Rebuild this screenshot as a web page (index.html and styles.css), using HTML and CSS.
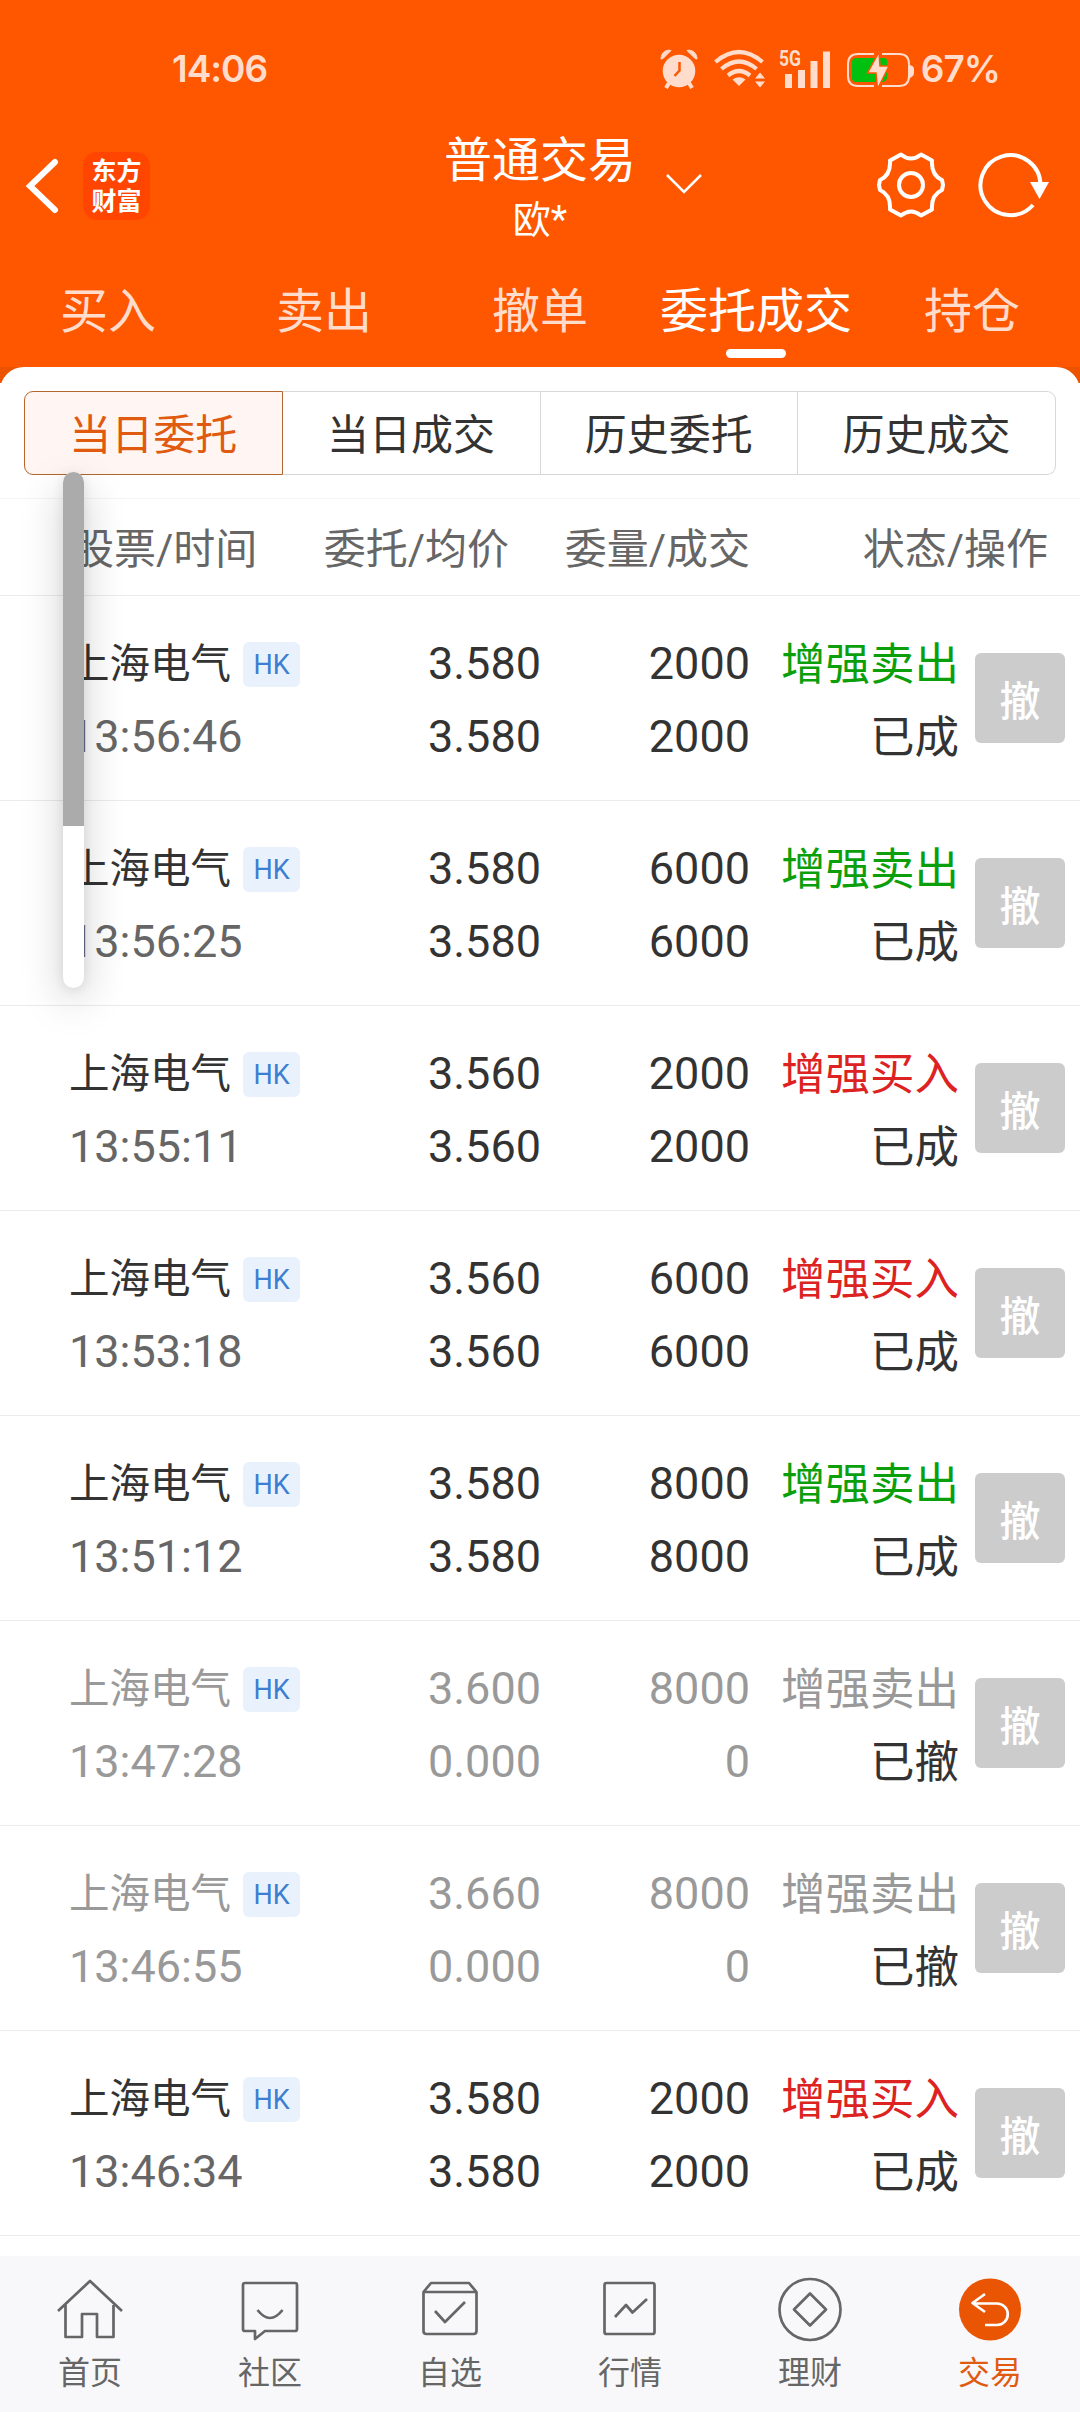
FILE: index.html
```html
<!DOCTYPE html>
<html lang="zh-CN">

<head>
	<title>委托成交</title>

	<meta charset="utf-8">

	<!-- Mobile Screen Resizing -->
	<meta name="viewport" content="width=device-width, initial-scale=1.0">

	<link rel="stylesheet" href="styles.css">
</head>

<body>

	<header class="header">
		<div class="status">
			<span class="status-time">14:06</span>
			<div class="status-icons">
				<svg class="icon-alarm" width="38" height="40" viewBox="0 0 38 40">
					<circle cx="19" cy="22" r="16.3" fill="currentColor" />
					<path d="M9 34l-3 5M29 34l3 5" stroke="currentColor" stroke-width="4" />
					<path d="M1 10C1 4 6 0 11 1.500L3 9.500zM37 10C37 4 32 0 27 1.500L35 9.500z" fill="currentColor" stroke="currentColor" stroke-width="1" />
					<path d="M19.500 13v8.500L14.500 27" fill="none" stroke="#ff5600" stroke-width="2.500" />
				</svg>
				<svg class="icon-wifi" width="52" height="40" viewBox="0 0 52 40">
					<path d="M1.500 13Q25 -7 48.500 13M7.500 20Q25 5 42.500 20M14 26.500Q25 17.500 36 26.500" fill="none" stroke="currentColor" stroke-width="4.200" />
					<path d="M25 37l-6.500-6.500Q25 26 31.500 30.500z" fill="currentColor" />
					<path d="M41 29.500l5-6 5 6zM41 32.500l5 6 5-6z" fill="currentColor" />
				</svg>
				<svg class="icon-signal" width="52" height="40" viewBox="0 0 52 40">
					<path d="M6 25h7v14H6zM19 21h7v18h-7zM31.500 12h7v27h-7zM44 2.500h7V39h-7z" fill="currentColor" />
					<text class="signal-label" x="0" y="17" textLength="22" lengthAdjust="spacingAndGlyphs">5G</text>
				</svg>
				<svg class="icon-battery" width="68" height="40" viewBox="0 0 68 40">
					<path d="M28 5H12Q2 5 2 15v12q0 10 10 10h16M36 37h17q10 0 10-10V15Q63 5 53 5H36" fill="none" stroke="currentColor" stroke-width="2" />
					<path d="M10 9h28q3 0 3 3v17q-1 4-5 4H10q-4 0-4-4V13q0-4 4-4z" fill="#00c010" />
					<path d="M63 16h1q4 1 4 4v4q0 3-4 5h-1z" fill="currentColor" />
					<path d="M33 3L21.500 24h8.500L31.500 40l11.500-23h-9z" fill="currentColor" stroke="#ff5600" stroke-width="1.500" />
				</svg>
			</div>
			<span class="status-battery">67%</span>
		</div>

		<div class="navbar">
			<div class="navbar-side">
				<svg width="34" height="56" viewBox="0 0 34 56">
					<path d="M30 4L5 28l25 24" fill="none" stroke="#fff" stroke-width="6" stroke-linecap="round" />
				</svg>
				<div class="logo">东方<br>财富</div>
			</div>
			<div class="navbar-title">
				<h1>普通交易</h1>
				<p>欧*</p>
				<svg class="chevron" width="38" height="22" viewBox="0 0 38 22">
					<path d="M2 2l17 17L36 2" fill="none" stroke="#fff" stroke-width="2.500" />
				</svg>
			</div>
			<div class="navbar-side navbar-right">
				<svg width="68" height="68" viewBox="0 0 68 68">
					<path d="M24 3.500Q34 11.500 44 3.500L55 9.500Q54 24 65 29L66 34 65 39Q54 44 55 58.500L44 64.500Q34 56.500 24 64.500L13 58.500Q14 44 3 39L2 34 3 29Q14 24 13 9.500Z" fill="none" stroke="#fff" stroke-width="4" stroke-linejoin="round" />
					<circle cx="34" cy="34" r="12" fill="none" stroke="#fff" stroke-width="4" />
				</svg>
				<svg width="72" height="68" viewBox="0 0 72 68">
					<path d="M62.500 34A30 30 0 1 0 55 54" fill="none" stroke="#fff" stroke-width="4" />
					<path d="M52 31h19l-9.500 17z" fill="#fff" />
				</svg>
			</div>
		</div>

		<nav class="tabs">
			<a class="tab">买入</a>
			<a class="tab">卖出</a>
			<a class="tab">撤单</a>
			<a class="tab active">委托成交</a>
			<a class="tab">持仓</a>
		</nav>
	</header>

	<main class="content">
		<div class="sheet">
			<div class="segments">
				<a class="segment active">当日委托</a>
				<a class="segment">当日成交</a>
				<a class="segment">历史委托</a>
				<a class="segment">历史成交</a>
			</div>

			<div class="row row-head">
				<div>股票/时间</div>
				<div>委托/均价</div>
				<div>委量/成交</div>
				<div>状态/操作</div>
			</div>

			<div id="orders"></div>
		</div>

		<div class="scrollbar">
			<div class="scrollbar-thumb"></div>
		</div>
	</main>

	<footer class="tabbar">
		<a class="tabbar-item">
			<svg width="72" height="72" viewBox="0 0 72 72">
				<path d="M4 38L36 8l32 30M11.500 32v32H28V41h15v23h16.500V32" />
			</svg>
			首页
		</a>
		<a class="tabbar-item">
			<svg width="72" height="72" viewBox="0 0 72 72">
				<path d="M11 10h50q2 0 2 2v44q0 2-2 2H31l-10 8v-8H11q-2 0-2-2V12q0-2 2-2zM23.500 37q12.500 16 25 0" />
			</svg>
			社区
		</a>
		<a class="tabbar-item">
			<svg width="72" height="72" viewBox="0 0 72 72">
				<path d="M9.500 19L17 10h38l7.500 9v39q0 3-3 3h-47q-3 0-3-3zM9.500 19h53M21 38l10 11 20-20" />
			</svg>
			自选
		</a>
		<a class="tabbar-item">
			<svg width="72" height="72" viewBox="0 0 72 72">
				<rect x="10.500" y="10" width="50" height="51" rx="2" />
				<path d="M21 44l11-12 6.500 7.500L53 26" />
			</svg>
			行情
		</a>
		<a class="tabbar-item">
			<svg width="72" height="72" viewBox="0 0 72 72">
				<circle cx="36" cy="36.500" r="30.500" />
				<path d="M36 20.500L52 36.500 36 52.500 20 36.500z" />
			</svg>
			理财
		</a>
		<a class="tabbar-item active">
			<svg width="72" height="72" viewBox="0 0 72 72">
				<circle class="disc" cx="36" cy="36.500" r="31" />
				<path class="arrow" d="M31 21L18.500 30 31 39M19 30.500h24a10.500 10.500 0 0 1 0 21.500H31" />
			</svg>
			交易
		</a>
	</footer>

	<script>
		// time, price, average price, amount, filled, side
		var orders = [
			['13:56:46', '3.580', '3.580', '2000', '2000', 'sell'],
			['13:56:25', '3.580', '3.580', '6000', '6000', 'sell'],
			['13:55:11', '3.560', '3.560', '2000', '2000', 'buy'],
			['13:53:18', '3.560', '3.560', '6000', '6000', 'buy'],
			['13:51:12', '3.580', '3.580', '8000', '8000', 'sell'],
			['13:47:28', '3.600', '0.000', '8000', '0', 'cancelled'],
			['13:46:55', '3.660', '0.000', '8000', '0', 'cancelled'],
			['13:46:34', '3.580', '3.580', '2000', '2000', 'buy']
		];

		var app = document.querySelector('#orders');

		// build a row for each order
		app.innerHTML = orders.map(function (order) {
			var side = order[5];
			return '<div class="row ' + side + '">' +
				'<div><div class="name">上海电气<span class="badge">HK</span></div><div class="time">' + order[0] + '</div></div>' +
				'<div><div>' + order[1] + '</div><div>' + order[2] + '</div></div>' +
				'<div><div>' + order[3] + '</div><div>' + order[4] + '</div></div>' +
				'<div class="result"><div class="side">' + (side === 'buy' ? '增强买入' : '增强卖出') + '</div>' +
				'<div class="state">' + (side === 'cancelled' ? '已撤' : '已成') + '</div></div>' +
				'<button class="btn">撤</button>' +
				'</div>';
		}).join('');
	</script>

</body>

</html>
```
FILE: styles.css
```css
*,
*:before,
*:after {
	box-sizing: border-box;
}

/**
 * Layout
 */
body {
	background-color: #ffffff;
	color: #333333;
	display: flex;
	flex-direction: column;
	font-family: Roboto, "Noto Sans CJK SC", sans-serif;
	height: 2412px;
	margin: 0;
	overflow: hidden;
	width: 1080px;
}

svg {
	display: block;
	flex: none;
}

.header {
	background-color: #ff5600;
	color: #ffffff;
	flex: none;
	height: 367px;
}

.content {
	background: linear-gradient(#ec5300 16px, #ffffff 16px);
	flex: 1;
	min-height: 0;
	position: relative;
}

.sheet {
	background-color: #ffffff;
	border-radius: 24px 24px 0 0;
	padding-top: 24px;
}

/**
 * Status bar
 */
.status {
	align-items: center;
	color: #ffdccb;
	display: flex;
	font-family: Inter, sans-serif;
	font-size: 37px;
	font-weight: 600;
	height: 137px;
	justify-content: space-between;
	letter-spacing: -1px;
	line-height: 1;
	padding: 0 80px 0 172px;
}

.status-icons {
	display: flex;
	margin-left: auto;
}

.icon-wifi {
	margin-left: 16px;
}

.icon-signal {
	margin-left: 13px;
	overflow: visible;
}

.icon-battery {
	margin-left: 15px;
}

.status-battery {
	margin-left: 7px;
}

.signal-label {
	fill: currentColor;
	font-family: Roboto, sans-serif;
	font-size: 22px;
	font-weight: 700;
	letter-spacing: 0;
}

/**
 * Navbar
 */
.navbar {
	display: flex;
	height: 116px;
	justify-content: space-between;
}

.navbar-side {
	align-items: center;
	display: flex;
	gap: 24px;
	height: 97px;
	padding-left: 25px;
	width: 280px;
}

.navbar-right {
	gap: 33px;
	height: 95px;
	justify-content: flex-end;
	padding: 0 30px 0 0;
}

.logo {
	background-color: #ff4500;
	border-radius: 14px;
	font-family: "Noto Sans CJK SC", sans-serif;
	font-size: 25px;
	font-weight: 700;
	height: 68px;
	line-height: 30px;
	padding-top: 2px;
	text-align: center;
	width: 67px;
}

.navbar-title {
	position: relative;
	text-align: center;
}

.navbar-title h1 {
	font-size: 48px;
	font-weight: 400;
	line-height: 48px;
	margin: 0;
}

.navbar-title p {
	font-size: 38px;
	line-height: 50px;
	margin: 10px 0 0;
}

.chevron {
	left: 100%;
	margin-left: 29px;
	position: absolute;
	top: 36px;
}

.tabs {
	display: flex;
	height: 114px;
}

.tab {
	color: #ffdccb;
	flex: 1;
	font-size: 48px;
	line-height: 118px;
	position: relative;
	text-align: center;
	white-space: nowrap;
}

.tab.active {
	color: #ffffff;
}

.tab.active:after {
	background-color: #ffffff;
	border-radius: 5px;
	bottom: 9px;
	content: "";
	height: 9px;
	left: 50%;
	margin-left: -30px;
	position: absolute;
	width: 60px;
}

/**
 * Segments
 */
.segments {
	display: flex;
	height: 84px;
	margin: 0 24px;
}

.segment {
	border: 1px solid #d5d7d8;
	border-left-width: 0;
	flex: 1;
	font-size: 42px;
	line-height: 87px;
	text-align: center;
}

.segment:last-child {
	border-radius: 0 9px 9px 0;
}

.segment.active {
	background-color: #fff6f3;
	border: 1px solid #b5662f;
	border-radius: 9px 0 0 9px;
	color: #e05a10;
}

/**
 * Orders
 */
.row {
	border-bottom: 1px solid #ebebeb;
	display: grid;
	font-size: 45px;
	grid-template-columns: 271px 201px 209px 209px 106px;
	height: 205px;
	line-height: 73px;
	padding: 31px 15px 0 69px;
	text-align: right;
	white-space: nowrap;
}

.row > div:first-child {
	text-align: left;
}

.row-head {
	border-top: 1px solid #f5f5f5;
	color: #666666;
	font-size: 42px;
	grid-template-columns: 271px 169px 241px 298px;
	height: 98px;
	line-height: 102px;
	margin-top: 23px;
	padding-left: 69px;
	padding-right: 0;
	padding-top: 0;
}

.row-head > div:first-child {
	padding-left: 3px;
}

.row-head > div:nth-child(2) {
	margin-left: -20px;
	margin-right: 0;
	text-align: right;
}

.name {
	align-items: center;
	display: flex;
	font-size: 40.5px;
	padding-top: 2px;
	height: 73px;
}

.badge {
	background-color: #e8f1fc;
	border-radius: 6px;
	color: #3b7ed2;
	font-size: 27px;
	height: 45px;
	line-height: 46px;
	margin-left: 12px;
	text-align: center;
	width: 57px;
}

.time {
	color: #666666;
}

.result {
	font-size: 44.5px;
	padding-top: 2px;
}

.sell .side {
	color: #0b9f0b;
}

.buy .side {
	color: #dd2222;
}

.cancelled {
	color: #999999;
}

.cancelled .time {
	color: #999999;
}

.cancelled .state {
	color: #333333;
}

.btn {
	background-color: #cccccc;
	border: 0;
	border-radius: 6px;
	color: #ffffff;
	font-family: inherit;
	font-size: 41px;
	font-weight: 500;
	height: 90px;
	margin-left: 16px;
	margin-top: 26px;
	padding: 0;
}

/**
 * Scrollbar
 */
.scrollbar {
	background-color: #ffffff;
	border-radius: 11px;
	box-shadow: 0 14px 40px rgba(0, 0, 0, 0.22), 0 2px 12px rgba(0, 0, 0, 0.1);
	height: 516px;
	left: 63px;
	overflow: hidden;
	position: absolute;
	top: 105px;
	width: 21px;
}

.scrollbar-thumb {
	background-color: #ababab;
	height: 354px;
}

/**
 * Tab bar
 */
.tabbar {
	background-color: #f8f8fa;
	display: flex;
	flex: none;
	height: 156px;
	padding-top: 17px;
	position: relative;
}

.tabbar-item {
	align-items: center;
	color: #666666;
	display: flex;
	flex: 1;
	flex-direction: column;
	font-size: 32px;
	line-height: 57px;
}

.tabbar-item svg {
	fill: none;
	stroke: #666666;
	stroke-linejoin: round;
	stroke-width: 2.7;
}

.tabbar-item.active {
	color: #e05a10;
}

.tabbar-item .disc {
	fill: #ea5504;
	stroke: none;
}

.tabbar-item .arrow {
	stroke: #ffffff;
}
```
